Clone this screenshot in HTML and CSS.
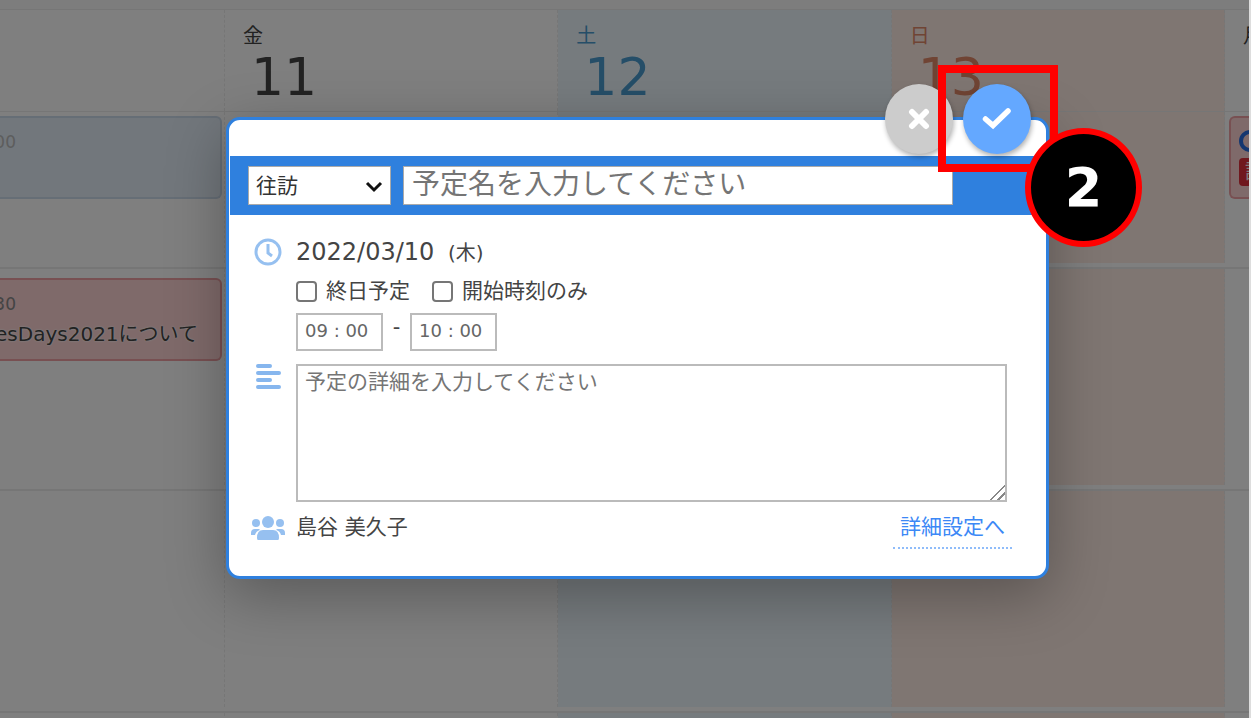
FILE: index.html
```html
<!DOCTYPE html>
<html lang="ja">
<head>
<meta charset="utf-8">
<title>予定の登録</title>
<link rel="stylesheet" href="styles.css">
</head>
<body>
<div class="screen">
  <div class="calendar">
    <div class="topbar"></div>
    <div class="week week-head">
      <div class="cell"></div>
      <div class="cell"><span class="weekday">金</span><span class="daynum">11</span></div>
      <div class="cell sat"><span class="weekday">土</span><span class="daynum">12</span></div>
      <div class="cell sun"><span class="weekday">日</span><span class="daynum">13</span></div>
      <div class="cell"><span class="weekday">月</span></div>
    </div>
    <div class="week week-a">
      <div class="cell"><div class="event event-blue"><span class="time">00</span></div></div>
      <div class="cell"></div>
      <div class="cell sat"></div>
      <div class="cell sun"></div>
      <div class="cell"><div class="event event-red event-cut">
        <svg class="ring" width="22" height="22" viewBox="0 0 22 22"><circle cx="11" cy="11" r="9" fill="none" stroke="#2a6fe0" stroke-width="4"/></svg>
        <span class="tag">訪</span></div></div>
    </div>
    <div class="week week-b">
      <div class="cell"><div class="event event-red"><span class="time">30</span><span class="name">esDays2021について</span></div></div>
      <div class="cell"></div>
      <div class="cell sat"></div>
      <div class="cell sun"></div>
      <div class="cell"></div>
    </div>
    <div class="week week-c">
      <div class="cell"></div>
      <div class="cell"></div>
      <div class="cell sat"></div>
      <div class="cell sun"></div>
      <div class="cell"></div>
    </div>
    <div class="week week-d">
      <div class="cell"></div>
      <div class="cell"></div>
      <div class="cell sat"></div>
      <div class="cell sun"></div>
      <div class="cell"></div>
    </div>
  </div>

  <div class="overlay">
    <form class="dialog">
      <div class="actions">
        <button type="button" class="round round-close" aria-label="閉じる">
          <svg width="22" height="22" viewBox="0 0 22 22"><path d="M4 4L18 18M18 4L4 18" fill="none" stroke="#fff" stroke-width="6" stroke-linecap="round"/></svg>
        </button>
        <button type="button" class="round round-ok" aria-label="保存">
          <svg width="30" height="24" viewBox="0 0 30 24"><path d="M3.500 12L11 18.500L26 4" fill="none" stroke="#fff" stroke-width="5.500" stroke-linecap="round"/></svg>
        </button>
      </div>
      <div class="titlebar">
        <div class="kind">
          <select aria-label="種別"><option>往訪</option></select>
          <svg class="chevron" width="18" height="12" viewBox="0 0 18 12"><path d="M2 2L9 9L16 2" fill="none" stroke="#111" stroke-width="3"/></svg>
        </div>
        <input class="title" type="text" aria-label="予定名" placeholder="予定名を入力してください">
      </div>
      <div class="body">
        <svg class="icon icon-clock" width="28" height="28" viewBox="0 0 28 28" fill="none" stroke="#96c0f0"><circle cx="14" cy="14" r="12" stroke-width="3"/><path d="M14 6V15L18 18" stroke-width="3"/></svg>
        <div class="when">
          <div class="date">2022/03/10 <span class="dow">(木)</span></div>
          <div class="checks">
            <label><input type="checkbox">終日予定</label>
            <label><input type="checkbox">開始時刻のみ</label>
          </div>
          <div class="times">
            <input type="text" aria-label="開始時刻" value="09 : 00">
            <span class="dash">-</span>
            <input type="text" aria-label="終了時刻" value="10 : 00">
          </div>
        </div>
        <svg class="icon" width="26" height="26" viewBox="0 0 26 26" fill="none" stroke="#86b6ee" stroke-width="4" stroke-linecap="round"><path d="M3 2H15M3 9H24M3 16H15M3 23H24"/></svg>
        <textarea aria-label="詳細" placeholder="予定の詳細を入力してください"></textarea>
        <svg class="icon icon-people" width="36" height="26" viewBox="0 0 36 26" fill="#96c0f0"><circle cx="18" cy="7" r="6"/><circle cx="6" cy="8" r="4"/><circle cx="30" cy="8" r="4"/><path d="M8 25Q7 25 7 23Q7 15 13 15H23Q29 15 29 23Q29 25 28 25ZM1 20V18Q1 14 5 14H9L10 15Q6 16 5 20ZM35 20V18Q35 14 31 14H27L26 15Q30 16 31 20Z"/></svg>
        <div class="foot">
          <span class="member">島谷 美久子</span>
          <a class="more" href="#">詳細設定へ</a>
        </div>
      </div>
      <div class="mark"></div>
      <div class="step">2</div>
    </form>
  </div>
</div>
</body>
</html>
```
FILE: styles.css
```css
* { box-sizing: border-box; }
body {
  margin: 0;
  font-family: "DejaVu Sans", "Noto Sans CJK JP", sans-serif;
  font-size: 21px;
  line-height: 28px;
  color: #444;
}
.screen { position: relative; height: 100vh; overflow: hidden; border-right: 2px solid #ddd; }
input, select, textarea, button { font: inherit; color: inherit; margin: 0; border-radius: 0; }

.calendar { display: flex; flex-direction: column; height: 100%; background: #fff; }
.topbar { flex: none; height: 10px; background: #fafafa; border-bottom: 1px solid #ececec; }
.week {
  flex: none;
  display: grid;
  grid-template-columns: 225px repeat(3, minmax(0, 1fr)) 24px;
  height: 222px;
  padding-bottom: 4px;
  border-bottom: 2px solid #ececec;
}
.week-head { height: 102px; padding-bottom: 0; border-bottom-width: 1px; }
.week-a { height: 157px; }
.cell { min-width: 0; overflow: hidden; border-right: 1px dashed #ececec; }
.cell:last-child { border-right: 0; }
.sat { background: #ecf7fd; }
.sun { background: #ffece5; }
.week-head .cell { padding: 14px 0 0 18px; }
.weekday { display: block; line-height: 24px; font-size: 20px; }
.daynum { display: block; padding-left: 8px; font-size: 52px; line-height: 58px; }
.week-head .sat { color: #4a9cd0; }
.week-head .sun { color: #e08868; }

.event {
  display: flex;
  flex-direction: column;
  height: 83px;
  padding: 10px 0;
  border: 2px solid;
  border-left: 0;
  border-radius: 0 6px 6px 0;
}
.week-a .cell { padding: 4px 2px 0 0; }
.week-b .cell { padding: 9px 2px 0 0; }
.event-blue { background: #e4eef9; border-color: #ccdcec; color: #aaa; }
.event-red { background: #ffd4d4; border-color: #f0a0a4; }
.time { display: flex; justify-content: flex-end; width: 16px; overflow: hidden; font-size: 17px; color: #888; }
.event-blue .time { color: #bbb; }
.name { display: flex; justify-content: flex-end; padding: 2px 22px 0 0; overflow: hidden; white-space: nowrap; font-size: 20px; text-shadow: 0 0 2px #fff, 0 0 2px #fff; }
.week-a .cell:last-child { padding: 4px 0 0 4px; }
.event-cut { border-left: 2px solid #f0a0a4; border-right: 0; border-radius: 6px 0 0 6px; padding: 12px 0 0 8px; overflow: hidden; }
.ring { flex: none; }
.tag { width: 32px; margin-top: 6px; padding-left: 6px; border-radius: 4px; background: #e0303c; color: #fff; font-size: 20px; }

.overlay { position: absolute; inset: 0; padding: 117px 200px 0 226px; background: rgba(0, 0, 0, .5); }
.dialog {
  position: relative;
  padding-top: 36px;
  background: #fff;
  border: 3px solid #2f80de;
  border-radius: 14px;
  box-shadow: 0 16px 60px rgba(0, 0, 0, .3);
}
.actions { position: absolute; top: -36px; right: 15px; display: flex; gap: 10px; }
.round {
  display: flex;
  align-items: center;
  justify-content: center;
  width: 68px;
  height: 70px;
  padding: 0;
  border: 0;
  border-radius: 50%;
  box-shadow: 1px 3px 5px rgba(0, 0, 0, .3);
}
.round-close { background: #ccc; }
.round-ok { background: #64a8ff; }
.titlebar { display: flex; gap: 12px; padding: 10px 93px 10px 18px; margin-left: 1px; background: #2f80de; }
.kind { position: relative; flex: none; width: 143px; }
.kind select { appearance: none; width: 100%; height: 39px; padding: 0 7px; border: 1px solid #aaa; background: #fff; color: #333; }
.chevron { position: absolute; right: 8px; top: 15px; pointer-events: none; }
.title { flex: 1; min-width: 0; height: 39px; padding: 0 8px 2px; border: 1px solid #aaa; background: #fff; font-size: 28px; }
::placeholder { color: #757575; opacity: 1; }

.body {
  display: grid;
  grid-template-columns: 39px minmax(0, 1fr);
  column-gap: 9px;
  padding: 19px 34px 27px 19px;
}
.icon { justify-self: center; }
.icon-clock { margin-top: 4px; }
.date { font-size: 24px; line-height: 36px; }
.dow { margin-left: 6px; font-size: 20px; }
.checks { display: flex; gap: 22px; margin-top: 6px; }
.checks label { display: flex; align-items: center; gap: 9px; }
.checks input { appearance: none; width: 21px; height: 21px; border: 2px solid #767676; border-radius: 4px; background: #fff; }
.times { display: flex; gap: 8px; margin: 8px 0 13px; }
.times input { width: 87px; height: 38px; padding: 0 7px 4px; border: 2px solid #bbb; font-size: 18px; color: #666; }
.dash { width: 11px; text-align: center; }
textarea { display: block; width: calc(100% - 5px); height: 138px; padding: 2px 7px; border: 2px solid #bbb; background: #fff; line-height: 28px; resize: both; }
textarea::-webkit-resizer { background: linear-gradient(135deg, transparent 48%, #888 48%, #888 56%, transparent 56%, transparent 72%, #888 72%, #888 80%, transparent 80%); }
.icon-people { margin-top: 13px; }
.foot { display: flex; justify-content: space-between; margin-top: 11px; }
.more { padding: 0 7px 6px; border-bottom: 2px dotted #8fbcfa; color: #3c88f6; text-decoration: none; }

.mark { position: absolute; top: -55px; right: -12px; width: 120px; height: 107px; border: 8px solid #f00; pointer-events: none; }
.step {
  position: absolute;
  top: 8px;
  right: -96px;
  display: flex;
  align-items: center;
  justify-content: center;
  width: 117px;
  height: 119px;
  border: 6px solid #f00;
  border-radius: 50%;
  background: #000;
  color: #fff;
  font-size: 54px;
  font-weight: 700;
}
```
